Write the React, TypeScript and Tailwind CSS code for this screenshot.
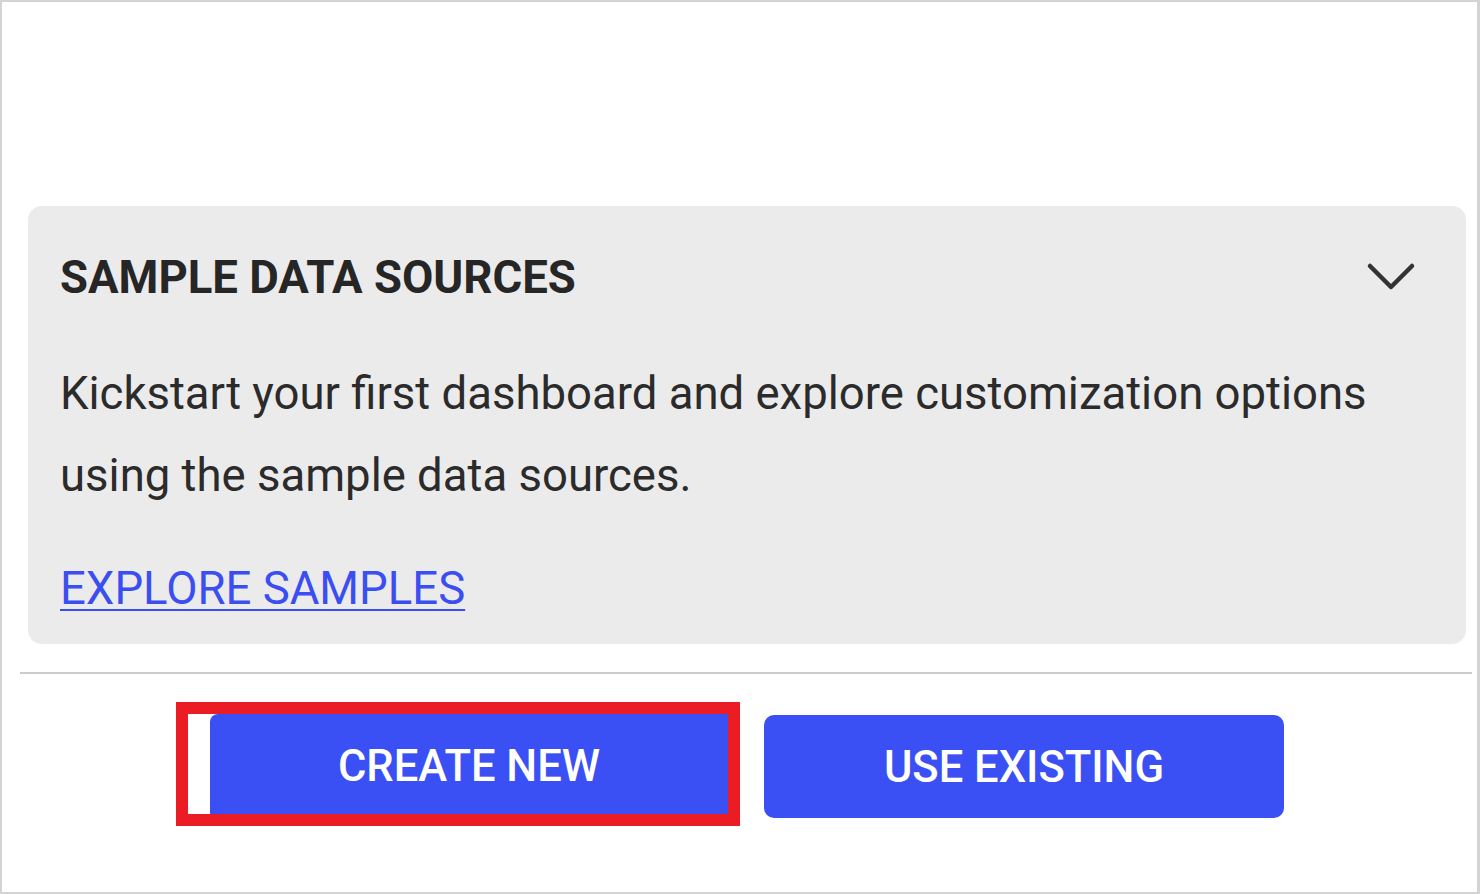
export default function App() {
  return (
    <div className="w-[1480px] h-[894px] bg-white border-2 border-r-[3px] border-[#d4d4d4] flex flex-col font-['Roboto',sans-serif]">
      <div className="h-[204px]" />
      {/* Sample data sources card */}
      <div className="ml-[26px] mr-[11px] h-[438px] rounded-[14px] bg-[#ebebeb] pl-[32px] pr-[49px] pt-[44px] flex flex-col">
        <div className="flex items-center justify-between">
          <h2 className="text-[45.5px] leading-[56px] font-bold text-[#262626]">SAMPLE DATA SOURCES</h2>
          <svg width="50" height="30" viewBox="0 0 50 30" fill="none" className="mt-[-3px] mr-[1px]">
            <path d="M4 4 L25 25 L46 4" stroke="#333" strokeWidth="4.5" strokeLinecap="round" strokeLinejoin="round" />
          </svg>
        </div>
        <p className="mt-[47px] text-[45.5px] leading-[82px] text-[#2b2b2b] max-w-[1340px]">
          Kickstart your first dashboard and explore customization options using the sample data sources.
        </p>
        <a href="#" className="mt-[44px] self-start text-[45.5px] leading-[56px] text-[#3b4ef0] underline underline-offset-[5px] decoration-2">
          EXPLORE SAMPLES
        </a>
      </div>
      <div className="mt-[28px] ml-[18px] mr-[5px] h-[2px] bg-[#cccccc]" />
      {/* Actions */}
      <div className="mt-[28px] flex items-start gap-[24px] pl-[174px]">
        <div className="border-[12px] border-[#ec1c24] bg-white pl-[22px]">
          <button className="w-[518px] h-[100px] pt-[6px] bg-[#3a50f5] rounded-tl-[8px] text-white text-[43.5px] font-medium">
            CREATE NEW
          </button>
        </div>
        <button className="mt-[13px] w-[520px] h-[103px] pt-[2px] bg-[#3a50f5] rounded-[10px] text-white text-[43.5px] font-medium">
          USE EXISTING
        </button>
      </div>
    </div>
  )
}
